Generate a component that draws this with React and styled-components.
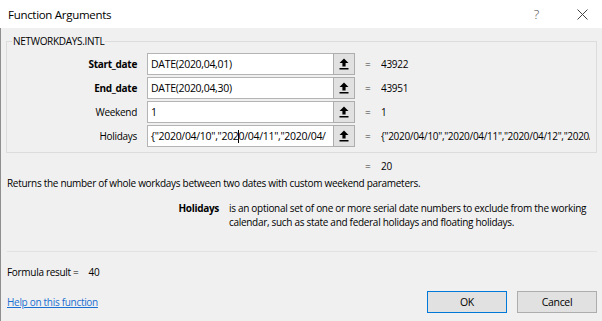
import React from "react";
import styled, { createGlobalStyle } from "styled-components";

const GlobalStyle = createGlobalStyle`
  html, body {
    margin: 0;
    padding: 0;
    background: #f0f0f0;
  }
  body {
    font-family: "Open Sans", "Noto Sans", sans-serif;
    font-size: 10px;
    letter-spacing: -0.3px;
    color: #000;
  }
`;

const Dialog = styled.div`
  width: 602px;
  height: 321px;
  display: flex;
  flex-direction: column;
  overflow: hidden;
`;

const TitleBar = styled.div`
  height: 28px;
  flex: none;
  background: #fff;
  display: flex;
  align-items: center;
  padding: 0 14px 0 8px;
  font-size: 11.5px;
`;

const Title = styled.div`
  flex: 1;
`;

const TitleButtons = styled.div`
  display: flex;
  align-items: center;
  gap: 38px;
  color: #444;
`;

const Question = styled.span`
  font-size: 13px;
  font-weight: 300;
  line-height: 1;
`;

const Body = styled.div`
  flex: 1;
  border-left: 1px solid #8f8f8f;
  padding: 6px 5px 0 5px;
  display: flex;
  flex-direction: column;
`;

const Group = styled.fieldset`
  margin: 0;
  padding: 0;
  border: 1px solid #dcdcdc;
  min-width: 0;
`;

const Legend = styled.legend`
  margin-left: 5px;
  padding: 0 1px;
  line-height: 14px;
`;

const ArgGrid = styled.div`
  display: grid;
  grid-template-columns: 140px 186px 22px 26px 1fr;
  grid-auto-rows: 22px;
  row-gap: 2px;
  padding: 5px 6px 5px 0;
  align-items: center;
`;

const ArgName = styled.div`
  text-align: right;
  padding-right: 10px;
  font-weight: ${(p) => (p.$required ? 700 : 400)};
  white-space: nowrap;
`;

const Field = styled.div`
  height: 22px;
  box-sizing: border-box;
  background: #fff;
  border: 1px solid #b4b4b4;
  border-right: none;
  padding-left: 3px;
  display: flex;
  align-items: center;
  white-space: nowrap;
  overflow: hidden;
  font-size: 10.5px;
`;

const Caret = styled.span`
  display: inline-block;
  width: 1px;
  height: 13px;
  background: #000;
  margin: 0 -0.5px;
`;

const RefButton = styled.div`
  height: 22px;
  box-sizing: border-box;
  background: #e1e1e1;
  border: 1px solid #adadad;
  display: flex;
  align-items: center;
  justify-content: center;
`;

const Equals = styled.div`
  padding-left: 10px;
  color: #333;
`;

const Value = styled.div`
  white-space: nowrap;
  overflow: hidden;
`;

const ResultGrid = styled.div`
  display: grid;
  grid-template-columns: 1px 140px 186px 22px 26px 1fr;
  height: 20px;
  margin-top: 3px;
  align-items: center;
`;

const Description = styled.div`
  line-height: 14px;
  padding-left: 1px;
  white-space: nowrap;
`;

const ArgHelp = styled.div`
  display: grid;
  grid-template-columns: 213px 1fr;
  column-gap: 10px;
  margin-top: 11px;
  line-height: 14px;
`;

const ArgHelpName = styled.div`
  text-align: right;
  font-weight: 700;
`;

const Separator = styled.div`
  height: 1px;
  background: #e2e2e2;
  margin: 22px 0 0 1px;
`;

const FormulaResult = styled.div`
  margin-top: 13px;
  line-height: 14px;
  padding-left: 1px;
  display: flex;
  gap: 10px;
`;

const Footer = styled.div`
  margin-top: 12px;
  display: flex;
  align-items: center;
  gap: 10px;
`;

const HelpLink = styled.a`
  flex: 1;
  color: #1a6fd0;
  text-decoration: underline;
  padding-left: 1px;
  cursor: pointer;
`;

const DialogButton = styled.button`
  width: 80px;
  height: 22px;
  box-sizing: border-box;
  background: #e1e1e1;
  border: 1px solid ${(p) => (p.$primary ? "#0078d7" : "#adadad")};
  font-family: inherit;
  font-size: 10.5px;
  letter-spacing: -0.3px;
  color: #000;
  padding: 0;
`;

function RefIcon() {
  return (
    <svg width="10" height="12" viewBox="0 0 10 12">
      <path d="M5 0.5 L9.5 5 H6.6 V8.5 H3.4 V5 H0.5 Z" fill="#000" />
      <rect x="0.5" y="10" width="9" height="1.5" fill="#000" />
    </svg>
  );
}

function CloseIcon() {
  return (
    <svg width="11" height="11" viewBox="0 0 11 11">
      <path d="M0.5 0.5 L10.5 10.5 M10.5 0.5 L0.5 10.5" stroke="#444" strokeWidth="1" />
    </svg>
  );
}

const args = [
  { name: "Start_date", required: true, input: "DATE(2020,04,01)", value: "43922" },
  { name: "End_date", required: true, input: "DATE(2020,04,30)", value: "43951" },
  { name: "Weekend", input: "1", value: "1" },
  {
    name: "Holidays",
    input: (
      <>
        {'{"2020/04/10","202'}
        <Caret />
        {'0/04/11","2020/04/'}
      </>
    ),
    value: '{"2020/04/10","2020/04/11","2020/04/12","2020/04/13"}',
  },
];

export default function App() {
  return (
    <>
      <GlobalStyle />
      <Dialog>
        <TitleBar>
          <Title>Function Arguments</Title>
          <TitleButtons>
            <Question>?</Question>
            <CloseIcon />
          </TitleButtons>
        </TitleBar>
        <Body>
          <Group>
            <Legend>NETWORKDAYS.INTL</Legend>
            <ArgGrid>
              {args.map((a) => (
                <React.Fragment key={a.name}>
                  <ArgName $required={a.required}>{a.name}</ArgName>
                  <Field>{a.input}</Field>
                  <RefButton>
                    <RefIcon />
                  </RefButton>
                  <Equals>=</Equals>
                  <Value>{a.value}</Value>
                </React.Fragment>
              ))}
            </ArgGrid>
          </Group>
          <ResultGrid>
            <span />
            <span />
            <span />
            <span />
            <Equals>=</Equals>
            <Value>20</Value>
          </ResultGrid>
          <Description>
            Returns the number of whole workdays between two dates with custom weekend parameters.
          </Description>
          <ArgHelp>
            <ArgHelpName>Holidays</ArgHelpName>
            <div>
              is an optional set of one or more serial date numbers to exclude from the working
              calendar, such as state and federal holidays and floating holidays.
            </div>
          </ArgHelp>
          <Separator />
          <FormulaResult>
            <span>Formula result =</span>
            <span>40</span>
          </FormulaResult>
          <Footer>
            <HelpLink>Help on this function</HelpLink>
            <DialogButton $primary>OK</DialogButton>
            <DialogButton>Cancel</DialogButton>
          </Footer>
        </Body>
      </Dialog>
    </>
  );
}
